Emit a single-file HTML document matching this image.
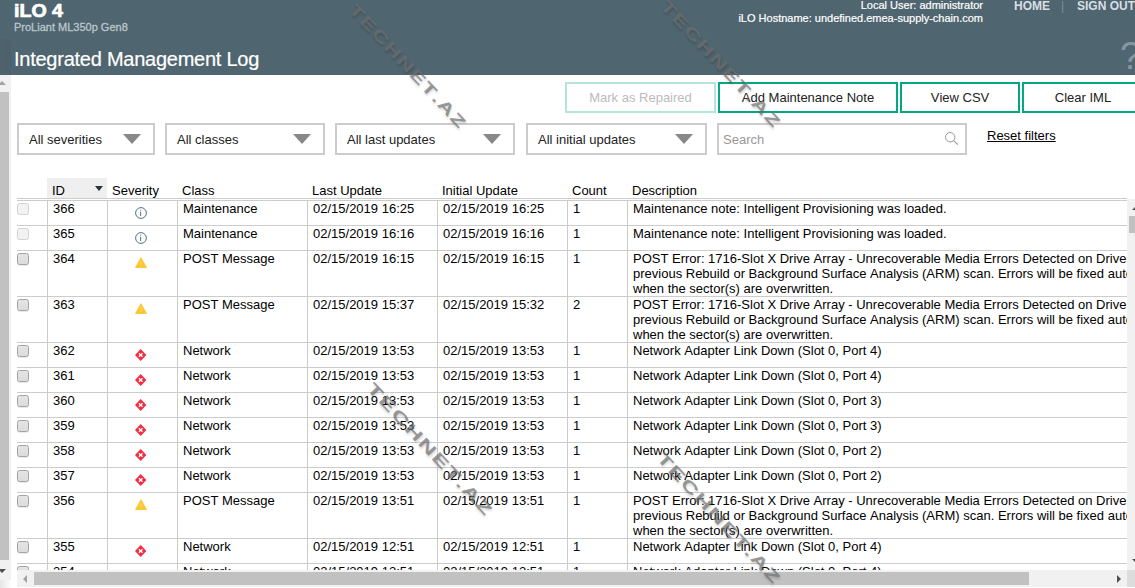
<!DOCTYPE html>
<html><head><meta charset="utf-8"><title>iLO 4 - Integrated Management Log</title>
<style>
html,body{margin:0;padding:0;}
body{width:1135px;height:588px;overflow:hidden;position:relative;background:#fff;font-family:"Liberation Sans",Arial,sans-serif;font-size:13px;color:#000;font-kerning:none;}
.abs{position:absolute;white-space:nowrap;}
#hdr{position:absolute;left:0;top:0;width:1135px;height:75px;background:#4f656f;}
#hdr .stripe{position:absolute;left:0;top:39px;width:11px;height:36px;background:linear-gradient(90deg,#4e636d,#4c616b);}
#ilo{left:14px;top:1px;font-size:17.5px;font-weight:bold;color:#fff;line-height:20px;transform-origin:0 50%;transform:scaleX(1.12);-webkit-text-stroke:0.7px #fff;}
#model{left:14px;top:21px;font-size:11px;color:#bcc6cc;line-height:13px;-webkit-text-stroke:0.3px #bcc6cc;}
#title{left:14px;top:47px;font-size:20px;letter-spacing:-0.25px;-webkit-text-stroke:0.2px #fff;color:#fff;line-height:24px;}
.usr{right:152px;font-size:11px;color:#fff;-webkit-text-stroke:0.2px #fff;line-height:13px;text-align:right;}
.nav{font-size:12px;font-weight:bold;color:#d8dfe3;line-height:14px;top:-1px;}
#help{left:1120px;top:36px;font-size:38px;color:#8497a1;line-height:40px;}
.btn{position:absolute;top:82px;height:27px;border:2px solid #01a982;box-sizing:content-box;background:#fff;text-align:center;line-height:27px;font-size:13px;color:#222;white-space:nowrap;}
.btn.dis{border-color:#b5e4d9;color:#bbb;}
.sel{position:absolute;top:123px;height:28px;border:2px solid #ccc;background:#fff;line-height:28px;font-size:13px;color:#222;white-space:nowrap;}
.sel span{position:absolute;left:10px;top:1px;}
.sel i{position:absolute;right:12px;top:9px;width:0;height:0;border-left:9px solid transparent;border-right:9px solid transparent;border-top:10px solid #888;}
#search{position:absolute;left:717px;top:123px;width:246px;height:28px;border:2px solid #ccc;background:#fff;line-height:28px;font-size:13px;color:#999;}
#search span{position:absolute;left:4px;top:1px;}
#reset{left:987px;top:128px;font-size:13px;line-height:16px;color:#000;text-decoration:underline;}
#lsb{position:absolute;left:0;top:75px;width:11px;height:505px;background:#f1f1f1;}
#lsb .th{position:absolute;left:0;top:17px;width:9px;height:468px;background:#c1c1c1;}
.arr{position:absolute;width:0;height:0;}
/* table */
#thead{position:absolute;left:17px;top:178px;width:1110px;height:20px;border-bottom:1px solid #ccc;}
#thead .idbg{position:absolute;left:30px;top:0;width:60px;height:20px;background:#efefef;}
#thead b{position:absolute;top:5px;font-weight:normal;line-height:16px;white-space:nowrap;}
#rows{position:absolute;left:17px;top:200px;width:1110px;height:370px;overflow:hidden;}
.r{position:relative;width:1110px;border-top:1px solid #ccc;box-sizing:border-box;height:25px;}
.r.t{height:46px;}
.r>div{position:absolute;top:0;bottom:0;border-left:1px solid #ccc;box-sizing:border-box;line-height:15px;white-space:nowrap;overflow:hidden;padding:0 0 0 5px;}
.r>div.cb{border-left:none;left:0;width:30px;padding:0;}
.c1{left:30px;width:60px}.c2{left:90px;width:70px}.c3{left:160px;width:130px}.c4{left:290px;width:130px}.c5{left:420px;width:130px}.c6{left:550px;width:60px}.c7{left:610px;width:500px}
.cb s{position:absolute;left:0;top:2px;width:10px;height:10px;border:1px solid #a2a2a2;border-radius:2.5px;background:linear-gradient(#e4e4e4,#dcdcdc);box-shadow:0 1px 0 rgba(0,0,0,.08);}
.cb s.d{border-color:#d2d2d2;background:#f2f2f2;box-shadow:none;}
.ic{position:absolute;left:27px;top:6px;}
#vsb{position:absolute;left:1127px;top:199px;width:8px;height:371px;background:#f1f1f1;}
#vsb .th{position:absolute;left:2px;top:17px;width:8px;height:17px;background:#c1c1c1;}
#hsb{position:absolute;left:17px;top:570px;width:1110px;height:17px;background:#f1f1f1;}
#hsb .th{position:absolute;left:17px;top:2px;width:995px;height:13px;background:#c1c1c1;}
#corner{position:absolute;left:1127px;top:570px;width:8px;height:17px;background:#dcdcdc;}
.wm{position:absolute;width:110px;font-size:16px;font-weight:bold;text-transform:uppercase;color:rgba(112,112,112,.7);letter-spacing:1px;transform-origin:50% 50%;line-height:20px;white-space:nowrap;text-shadow:1px 1px 2px rgba(0,0,0,.18);}
</style></head><body>
<div id="hdr"><div class="stripe"></div>
<div class="abs" id="ilo">iLO 4</div>
<div class="abs" id="model">ProLiant ML350p Gen8</div>
<div class="abs" id="title">Integrated Management Log</div>
<div class="abs usr" style="top:-1px">Local User: administrator</div>
<div class="abs usr" style="top:12px">iLO Hostname: undefined.emea-supply-chain.com</div>
<div class="abs nav" style="left:1014px">HOME</div>
<div class="abs nav" style="left:1061px;color:#7f919b;font-weight:normal">|</div>
<div class="abs nav" style="left:1077px">SIGN OUT</div>
<div class="abs" id="help">?</div>
</div>
<div id="lsb"><div class="th"></div><div class="arr" style="left:-2px;top:494px;border-left:4px solid transparent;border-right:4px solid transparent;border-top:4px solid #505050"></div><div class="arr" style="left:-2px;top:6px;border-left:4px solid transparent;border-right:4px solid transparent;border-bottom:4px solid #a3a3a3"></div></div>

<div style="position:absolute;left:0;top:580px;width:11px;height:8px;background:linear-gradient(90deg,#e6e6e6,#fdfdfd)"></div>
<div class="btn dis" style="left:565px;width:147px">Mark as Repaired</div>
<div class="btn" style="left:718px;width:176px">Add Maintenance Note</div>
<div class="btn" style="left:900px;width:116px">View CSV</div>
<div class="btn" style="left:1022px;width:118px">Clear IML</div>

<div class="sel" style="left:17px;width:134px"><span>All severities</span><i></i></div>
<div class="sel" style="left:165px;width:156px"><span>All classes</span><i></i></div>
<div class="sel" style="left:335px;width:176px"><span>All last updates</span><i></i></div>
<div class="sel" style="left:526px;width:177px"><span>All initial updates</span><i></i></div>
<div id="search"><span>Search</span>
<svg style="position:absolute;left:224px;top:6px" width="17" height="17" viewBox="0 0 17 17"><circle cx="7.2" cy="6.25" r="4.7" fill="none" stroke="#999" stroke-width="1"/><path d="M10.6 9.65L14.8 13.7" stroke="#999" stroke-width="1.1" fill="none"/></svg></div>
<div class="abs" id="reset">Reset filters</div>

<div id="thead"><div class="idbg"></div>
<b style="left:35px">ID</b><div class="arr" style="left:78px;top:8px;border-left:4.5px solid transparent;border-right:4.5px solid transparent;border-top:5px solid #27323c"></div>
<b style="left:95px">Severity</b><b style="left:165px">Class</b><b style="left:295px">Last Update</b><b style="left:425px">Initial Update</b><b style="left:555px">Count</b><b style="left:615px">Description</b></div>

<div id="rows">
<!--ROWS-->
<div class="r"><div class="cb"><s class="d"></s></div><div class="c1">366</div><div class="c2"><svg class="ic" width="13" height="13" viewBox="0 0 13 13"><circle cx="6" cy="6" r="5.4" fill="#fff" stroke="#4f7288" stroke-width="1"/><rect x="5.15" y="4.7" width="1" height="4.3" fill="#4f7288"/><rect x="5.15" y="2.7" width="1" height="1" fill="#4f7288"/></svg></div><div class="c3">Maintenance</div><div class="c4">02/15/2019 16:25</div><div class="c5">02/15/2019 16:25</div><div class="c6">1</div><div class="c7">Maintenance note: Intelligent Provisioning was loaded.</div></div>
<div class="r"><div class="cb"><s class="d"></s></div><div class="c1">365</div><div class="c2"><svg class="ic" width="13" height="13" viewBox="0 0 13 13"><circle cx="6" cy="6" r="5.4" fill="#fff" stroke="#4f7288" stroke-width="1"/><rect x="5.15" y="4.7" width="1" height="4.3" fill="#4f7288"/><rect x="5.15" y="2.7" width="1" height="1" fill="#4f7288"/></svg></div><div class="c3">Maintenance</div><div class="c4">02/15/2019 16:16</div><div class="c5">02/15/2019 16:16</div><div class="c6">1</div><div class="c7">Maintenance note: Intelligent Provisioning was loaded.</div></div>
<div class="r t"><div class="cb"><s></s></div><div class="c1">364</div><div class="c2"><svg class="ic" width="13" height="13" viewBox="0 0 13 13"><path d="M6 0.7L11.5 10.5H0.5Z" fill="#fbc731" stroke="#fbc731" stroke-width="0.9" stroke-linejoin="round"/><rect x="5.5" y="4" width="1" height="3.4" fill="#fdda7c"/><rect x="5.3" y="8.3" width="1.4" height="0.9" fill="#fdda7c"/></svg></div><div class="c3">POST Message</div><div class="c4">02/15/2019 16:15</div><div class="c5">02/15/2019 16:15</div><div class="c6">1</div><div class="c7">POST Error: 1716-Slot X Drive Array - Unrecoverable Media Errors Detected on Drives during<br>previous Rebuild or Background Surface Analysis (ARM) scan. Errors will be fixed automatically<br>when the sector(s) are overwritten.</div></div>
<div class="r t"><div class="cb"><s></s></div><div class="c1">363</div><div class="c2"><svg class="ic" width="13" height="13" viewBox="0 0 13 13"><path d="M6 0.7L11.5 10.5H0.5Z" fill="#fbc731" stroke="#fbc731" stroke-width="0.9" stroke-linejoin="round"/><rect x="5.5" y="4" width="1" height="3.4" fill="#fdda7c"/><rect x="5.3" y="8.3" width="1.4" height="0.9" fill="#fdda7c"/></svg></div><div class="c3">POST Message</div><div class="c4">02/15/2019 15:37</div><div class="c5">02/15/2019 15:32</div><div class="c6">2</div><div class="c7">POST Error: 1716-Slot X Drive Array - Unrecoverable Media Errors Detected on Drives during<br>previous Rebuild or Background Surface Analysis (ARM) scan. Errors will be fixed automatically<br>when the sector(s) are overwritten.</div></div>
<div class="r"><div class="cb"><s></s></div><div class="c1">362</div><div class="c2"><svg class="ic" width="13" height="13" viewBox="0 0 13 13"><path d="M5.7 0L11.4 6L5.7 12L0 6Z" fill="#f42d40"/><path d="M3.9 4.2L7.5 7.8M7.5 4.2L3.9 7.8" stroke="#fff" stroke-width="1.3" fill="none"/><circle cx="5.7" cy="6" r="1" fill="#fff"/></svg></div><div class="c3">Network</div><div class="c4">02/15/2019 13:53</div><div class="c5">02/15/2019 13:53</div><div class="c6">1</div><div class="c7">Network Adapter Link Down (Slot 0, Port 4)</div></div>
<div class="r"><div class="cb"><s></s></div><div class="c1">361</div><div class="c2"><svg class="ic" width="13" height="13" viewBox="0 0 13 13"><path d="M5.7 0L11.4 6L5.7 12L0 6Z" fill="#f42d40"/><path d="M3.9 4.2L7.5 7.8M7.5 4.2L3.9 7.8" stroke="#fff" stroke-width="1.3" fill="none"/><circle cx="5.7" cy="6" r="1" fill="#fff"/></svg></div><div class="c3">Network</div><div class="c4">02/15/2019 13:53</div><div class="c5">02/15/2019 13:53</div><div class="c6">1</div><div class="c7">Network Adapter Link Down (Slot 0, Port 4)</div></div>
<div class="r"><div class="cb"><s></s></div><div class="c1">360</div><div class="c2"><svg class="ic" width="13" height="13" viewBox="0 0 13 13"><path d="M5.7 0L11.4 6L5.7 12L0 6Z" fill="#f42d40"/><path d="M3.9 4.2L7.5 7.8M7.5 4.2L3.9 7.8" stroke="#fff" stroke-width="1.3" fill="none"/><circle cx="5.7" cy="6" r="1" fill="#fff"/></svg></div><div class="c3">Network</div><div class="c4">02/15/2019 13:53</div><div class="c5">02/15/2019 13:53</div><div class="c6">1</div><div class="c7">Network Adapter Link Down (Slot 0, Port 3)</div></div>
<div class="r"><div class="cb"><s></s></div><div class="c1">359</div><div class="c2"><svg class="ic" width="13" height="13" viewBox="0 0 13 13"><path d="M5.7 0L11.4 6L5.7 12L0 6Z" fill="#f42d40"/><path d="M3.9 4.2L7.5 7.8M7.5 4.2L3.9 7.8" stroke="#fff" stroke-width="1.3" fill="none"/><circle cx="5.7" cy="6" r="1" fill="#fff"/></svg></div><div class="c3">Network</div><div class="c4">02/15/2019 13:53</div><div class="c5">02/15/2019 13:53</div><div class="c6">1</div><div class="c7">Network Adapter Link Down (Slot 0, Port 3)</div></div>
<div class="r"><div class="cb"><s></s></div><div class="c1">358</div><div class="c2"><svg class="ic" width="13" height="13" viewBox="0 0 13 13"><path d="M5.7 0L11.4 6L5.7 12L0 6Z" fill="#f42d40"/><path d="M3.9 4.2L7.5 7.8M7.5 4.2L3.9 7.8" stroke="#fff" stroke-width="1.3" fill="none"/><circle cx="5.7" cy="6" r="1" fill="#fff"/></svg></div><div class="c3">Network</div><div class="c4">02/15/2019 13:53</div><div class="c5">02/15/2019 13:53</div><div class="c6">1</div><div class="c7">Network Adapter Link Down (Slot 0, Port 2)</div></div>
<div class="r"><div class="cb"><s></s></div><div class="c1">357</div><div class="c2"><svg class="ic" width="13" height="13" viewBox="0 0 13 13"><path d="M5.7 0L11.4 6L5.7 12L0 6Z" fill="#f42d40"/><path d="M3.9 4.2L7.5 7.8M7.5 4.2L3.9 7.8" stroke="#fff" stroke-width="1.3" fill="none"/><circle cx="5.7" cy="6" r="1" fill="#fff"/></svg></div><div class="c3">Network</div><div class="c4">02/15/2019 13:53</div><div class="c5">02/15/2019 13:53</div><div class="c6">1</div><div class="c7">Network Adapter Link Down (Slot 0, Port 2)</div></div>
<div class="r t"><div class="cb"><s></s></div><div class="c1">356</div><div class="c2"><svg class="ic" width="13" height="13" viewBox="0 0 13 13"><path d="M6 0.7L11.5 10.5H0.5Z" fill="#fbc731" stroke="#fbc731" stroke-width="0.9" stroke-linejoin="round"/><rect x="5.5" y="4" width="1" height="3.4" fill="#fdda7c"/><rect x="5.3" y="8.3" width="1.4" height="0.9" fill="#fdda7c"/></svg></div><div class="c3">POST Message</div><div class="c4">02/15/2019 13:51</div><div class="c5">02/15/2019 13:51</div><div class="c6">1</div><div class="c7">POST Error: 1716-Slot X Drive Array - Unrecoverable Media Errors Detected on Drives during<br>previous Rebuild or Background Surface Analysis (ARM) scan. Errors will be fixed automatically<br>when the sector(s) are overwritten.</div></div>
<div class="r"><div class="cb"><s></s></div><div class="c1">355</div><div class="c2"><svg class="ic" width="13" height="13" viewBox="0 0 13 13"><path d="M5.7 0L11.4 6L5.7 12L0 6Z" fill="#f42d40"/><path d="M3.9 4.2L7.5 7.8M7.5 4.2L3.9 7.8" stroke="#fff" stroke-width="1.3" fill="none"/><circle cx="5.7" cy="6" r="1" fill="#fff"/></svg></div><div class="c3">Network</div><div class="c4">02/15/2019 12:51</div><div class="c5">02/15/2019 12:51</div><div class="c6">1</div><div class="c7">Network Adapter Link Down (Slot 0, Port 4)</div></div>
<div class="r"><div class="cb"><s></s></div><div class="c1">354</div><div class="c2"><svg class="ic" width="13" height="13" viewBox="0 0 13 13"><path d="M5.7 0L11.4 6L5.7 12L0 6Z" fill="#f42d40"/><path d="M3.9 4.2L7.5 7.8M7.5 4.2L3.9 7.8" stroke="#fff" stroke-width="1.3" fill="none"/><circle cx="5.7" cy="6" r="1" fill="#fff"/></svg></div><div class="c3">Network</div><div class="c4">02/15/2019 12:51</div><div class="c5">02/15/2019 12:51</div><div class="c6">1</div><div class="c7">Network Adapter Link Down (Slot 0, Port 4)</div></div>
<!--/ROWS-->
</div>
<div id="vsb"><div class="th"></div><div class="arr" style="left:5px;top:7px;border-left:4px solid transparent;border-right:4px solid transparent;border-bottom:4px solid #505050"></div><div class="arr" style="left:5px;top:360px;border-left:4px solid transparent;border-right:4px solid transparent;border-top:4px solid #505050"></div></div>
<div id="hsb"><div class="th"></div><div class="arr" style="left:6px;top:5px;border-top:4px solid transparent;border-bottom:4px solid transparent;border-right:4px solid #a3a3a3"></div><div class="arr" style="left:1100px;top:5px;border-top:4px solid transparent;border-bottom:4px solid transparent;border-left:4px solid #505050"></div></div><div id="corner"></div>
<!--WM-->
<div class="wm" style="left:351.8px;top:55.5px;transform:rotate(47deg) scaleX(1.473)">TechNet.az</div>
<div class="wm" style="left:664.8px;top:54.2px;transform:rotate(47deg) scaleX(1.507)">TechNet.az</div>
<div class="wm" style="left:373.6px;top:439.1px;transform:rotate(47deg) scaleX(1.579)">TechNet.az</div>
<div class="wm" style="left:662.9px;top:507.8px;transform:rotate(47deg) scaleX(1.558)">TechNet.az</div>
<!--/WM-->
</body></html>
